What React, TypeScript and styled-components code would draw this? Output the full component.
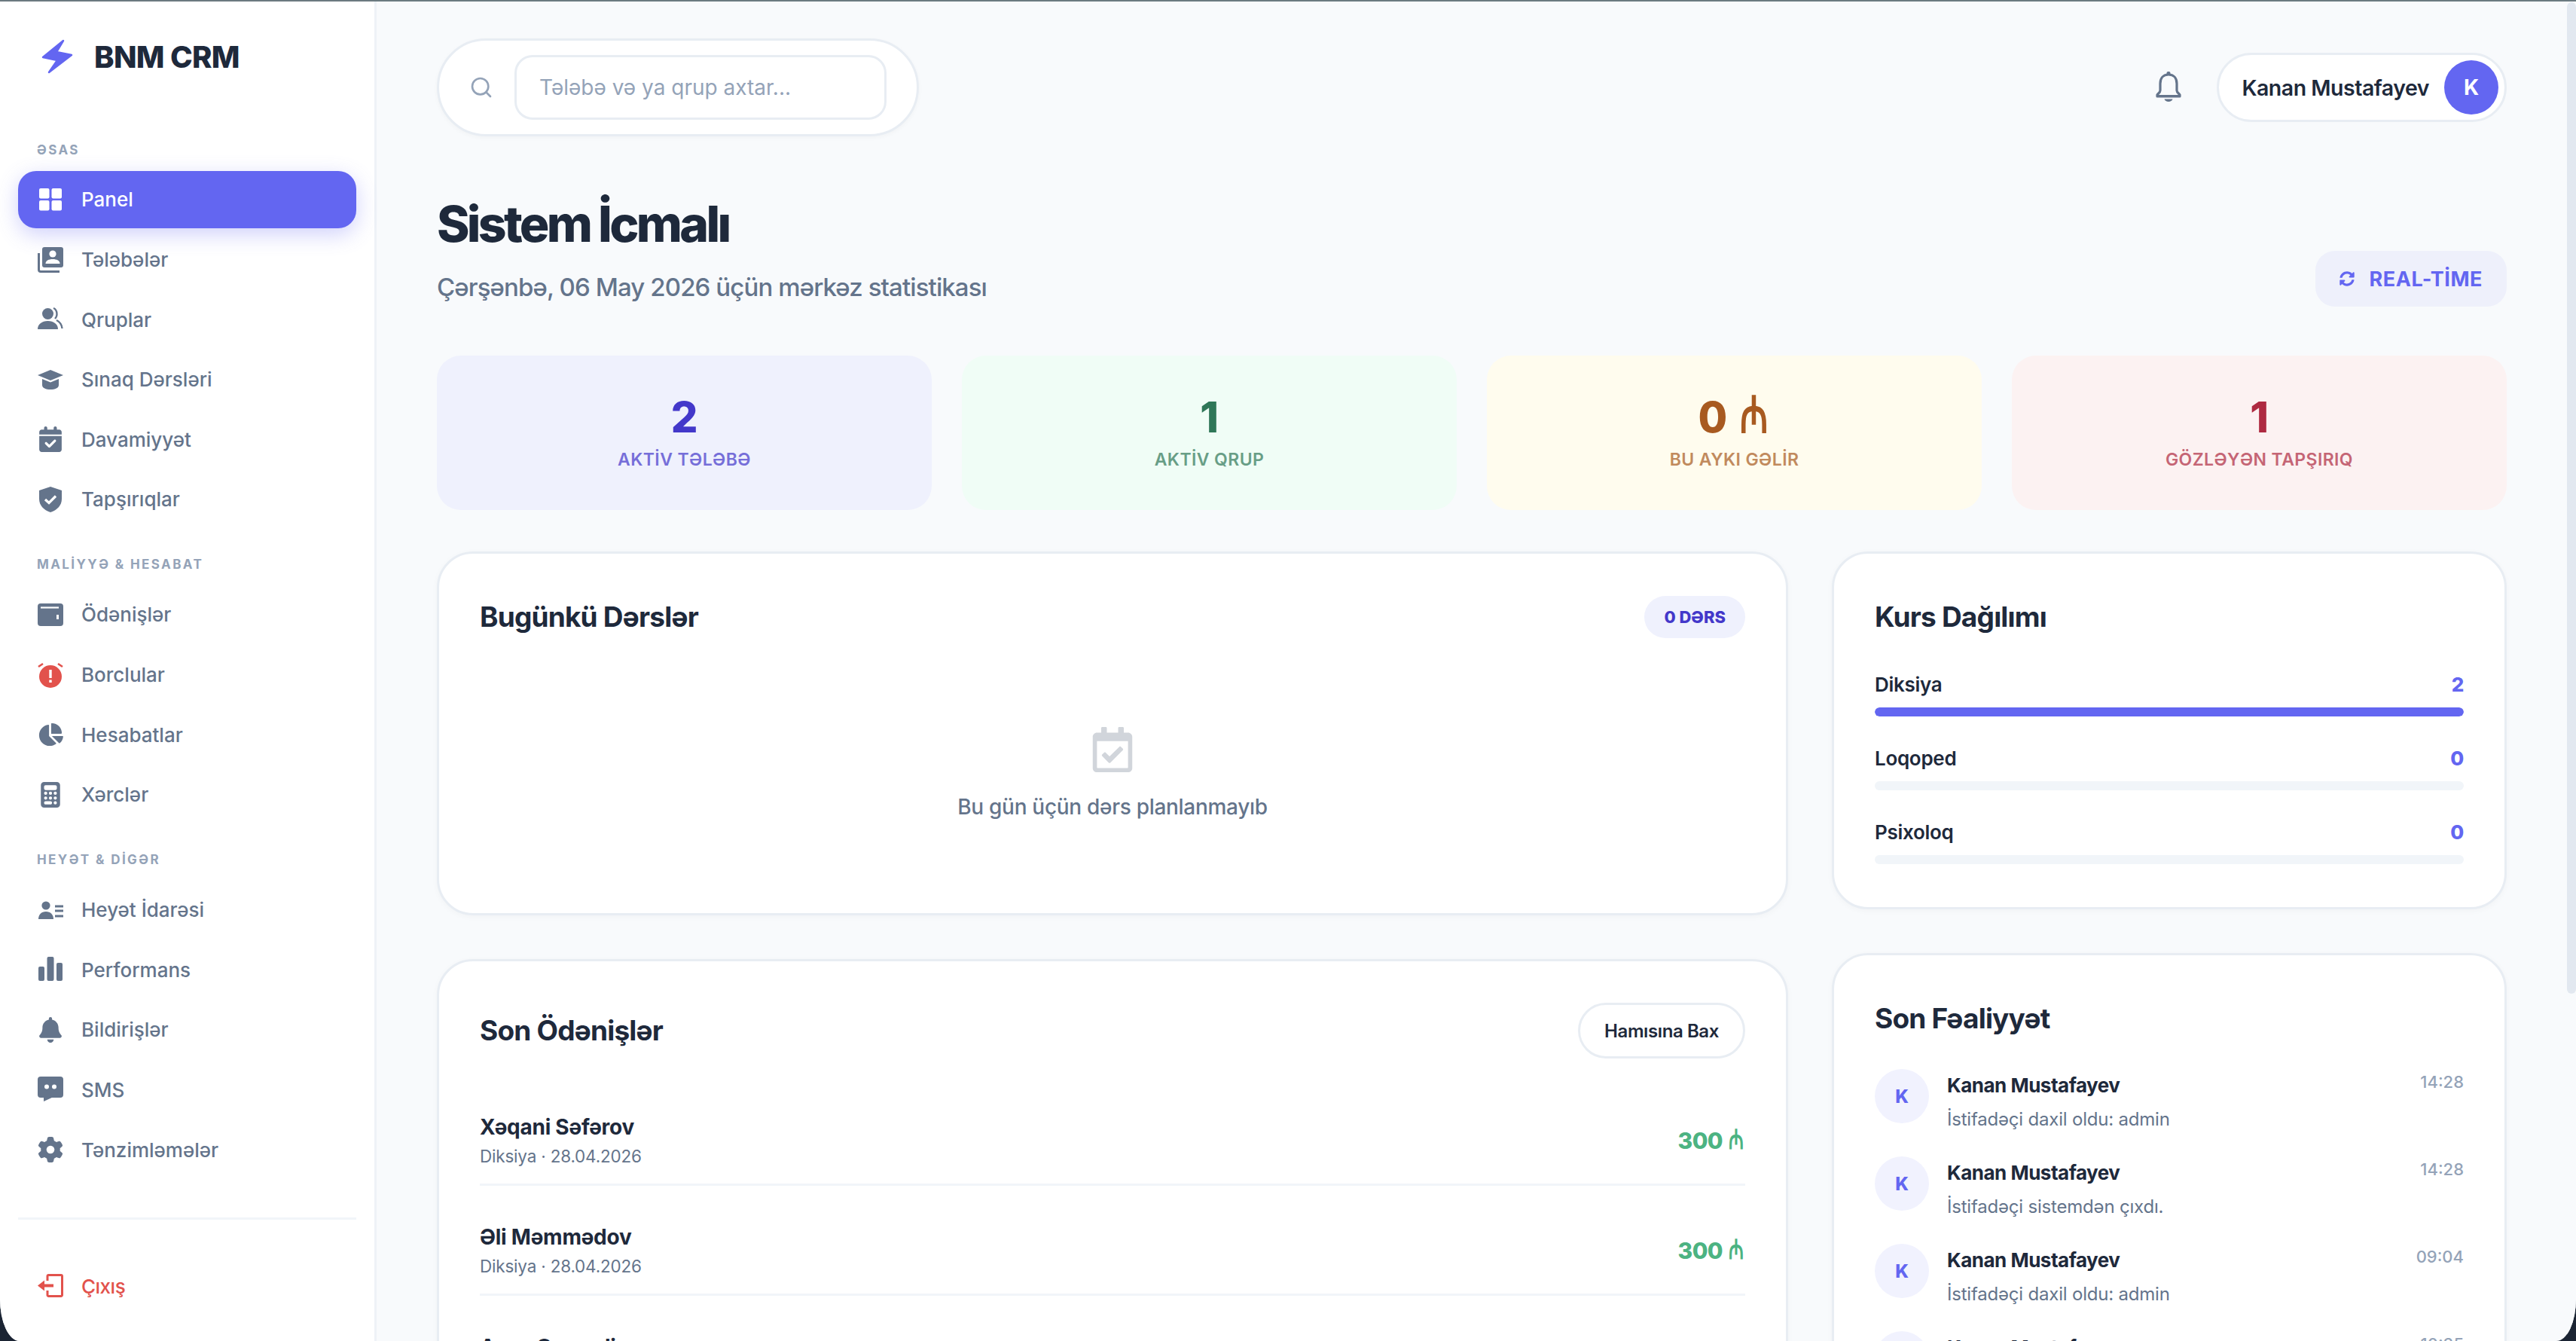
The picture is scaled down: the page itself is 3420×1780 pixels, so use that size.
import styled, { createGlobalStyle } from 'styled-components'
import { LuSearch } from 'react-icons/lu'
import { FaSyncAlt, FaRegCalendarCheck } from 'react-icons/fa'
import {
  FaCalendarCheck,
  FaChartPie,
  FaCalculator,
  FaBell,
  FaGear,
} from 'react-icons/fa6'

const GlobalStyle = createGlobalStyle`
  html, body {
    margin: 0;
    padding: 0;
    height: 100%;
    background: #1b2433;
    overflow: hidden;
  }
  * { box-sizing: border-box; }
`

const FONT = `Inter, "Noto Sans", sans-serif`

const BoltLogo = () => (
  <svg width="42" height="46" viewBox="0 0 42 46">
    <path
      d="M29 2 L2 24 L21 28 L10 44 L40 21 L20 17 Z"
      fill="#6366f1"
      stroke="#6366f1"
      strokeWidth="2.5"
      strokeLinejoin="round"
    />
  </svg>
)

const Icon = ({ children }: { children: React.ReactNode }) => (
  <svg viewBox="0 0 34 34" fill="currentColor">
    {children}
  </svg>
)

const PanelIcon = () => (
  <Icon>
    <rect x="2" y="2" width="13.5" height="13.5" rx="2" />
    <rect x="18.5" y="2" width="13.5" height="13.5" rx="2" />
    <rect x="2" y="18" width="13.5" height="13.5" rx="2" />
    <rect x="18.5" y="18" width="13.5" height="13.5" rx="2" />
  </Icon>
)

const StudentsIcon = () => (
  <Icon>
    <rect x="6" y="0" width="28" height="27" rx="3" />
    <path d="M1.5 8 V30 a2.5 2.5 0 0 0 2.5 2.5 H29" fill="none" stroke="currentColor" strokeWidth="3" />
    <circle cx="20" cy="9" r="4.6" fill="#fff" />
    <path d="M10.5 22 c0-4 4-6 9.500-6 s9.500 2 9.500 6 Z" fill="#fff" />
  </Icon>
)

const GroupsIcon = () => (
  <Icon>
    <circle cx="13.500" cy="9.500" r="7.500" />
    <path d="M0 30 c0-7 6-11 13.500-11 s13.500 4 13.500 11 Z" />
    <path d="M21 2 c5 2 6 10 2 14" fill="none" stroke="currentColor" strokeWidth="2.400" />
    <path d="M25 18 c4 2 7 6 7.500 11" fill="none" stroke="currentColor" strokeWidth="2.400" />
  </Icon>
)

const TrialIcon = () => (
  <Icon>
    <path d="M17 4 L34 11 L17 18 L0 11 Z" />
    <path d="M6 16 v8 c0 4 5 6 11 6 s11-2 11-6 v-8 l-11 4.500 Z" />
  </Icon>
)

const ShieldIcon = () => (
  <Icon>
    <path d="M17 0 L32 5 V16 c0 9-6 15-15 18 c-9-3-15-9-15-18 V5 Z" />
    <path d="M10 17 L15 21.500 L24 12.500" fill="none" stroke="#fff" strokeWidth="3.200" />
  </Icon>
)

const WalletIcon = () => (
  <Icon>
    <rect x="0" y="2" width="34" height="30" rx="4" />
    <path d="M4 7.500 H28" stroke="#fff" strokeWidth="2.200" />
    <rect x="25" y="17" width="3" height="6" fill="#fff" />
  </Icon>
)

const DebtIcon = () => (
  <Icon>
    <circle cx="17" cy="19" r="15" />
    <path d="M1 6 L7 2 M27 2 L33 6" stroke="currentColor" strokeWidth="2.600" />
    <rect x="15.300" y="10" width="3.400" height="11" fill="#fff" />
    <rect x="15.300" y="23.500" width="3.400" height="3.500" fill="#fff" />
  </Icon>
)

const StaffIcon = () => (
  <Icon>
    <circle cx="11" cy="11" r="5.600" />
    <path d="M1 29 c0-6 4-10 10-10 s10 4 10 10 Z" />
    <path d="M23 12 H34 M23 18 H34 M23 25 H34" stroke="currentColor" strokeWidth="3" />
  </Icon>
)

const BarsIcon = () => (
  <Icon>
    <rect x="1" y="13" width="8" height="19" rx="2" />
    <rect x="12.500" y="0" width="9" height="32" rx="2" />
    <rect x="25" y="8" width="8" height="24" rx="2" />
  </Icon>
)

const SmsIcon = () => (
  <Icon>
    <rect x="0" y="0" width="34" height="28" rx="4" />
    <path d="M8 26 V33 L21 27 Z" />
    <circle cx="12" cy="13.500" r="3" fill="#fff" />
    <circle cx="22" cy="13.500" r="3" fill="#fff" />
  </Icon>
)

const LogoutIcon = () => (
  <Icon>
    <path
      d="M13 9 V3 a1.500 1.500 0 0 1 1.500-1.500 H31 a1.500 1.500 0 0 1 1.500 1.500 V28 a1.500 1.500 0 0 1-1.500 1.500 H14.500 a1.500 1.500 0 0 1-1.500-1.500 V22"
      fill="none"
      stroke="currentColor"
      strokeWidth="3"
    />
    <path d="M0 15.500 L9 8.500 V13.500 H21 V17.500 H9 V22.500 Z" />
  </Icon>
)

const nav = [
  {
    title: 'ƏSAS',
    items: [
      { icon: <PanelIcon />, label: 'Panel', active: true },
      { icon: <StudentsIcon />, label: 'Tələbələr' },
      { icon: <GroupsIcon />, label: 'Qruplar' },
      { icon: <TrialIcon />, label: 'Sınaq Dərsləri' },
      { icon: <FaCalendarCheck />, label: 'Davamiyyət' },
      { icon: <ShieldIcon />, label: 'Tapşırıqlar' },
    ],
  },
  {
    title: 'MALİYYƏ & HESABAT',
    items: [
      { icon: <WalletIcon />, label: 'Ödənişlər' },
      { icon: <DebtIcon />, label: 'Borclular', danger: true },
      { icon: <FaChartPie />, label: 'Hesabatlar' },
      { icon: <FaCalculator />, label: 'Xərclər' },
    ],
  },
  {
    title: 'HEYƏT & DİGƏR',
    items: [
      { icon: <StaffIcon />, label: 'Heyət İdarəsi' },
      { icon: <BarsIcon />, label: 'Performans' },
      { icon: <FaBell />, label: 'Bildirişlər' },
      { icon: <SmsIcon />, label: 'SMS' },
      { icon: <FaGear />, label: 'Tənzimləmələr' },
    ],
  },
]

const stats = [
  { value: '2', label: 'Aktİv Tələbə', bg: '#eff1fd', color: '#4338ca' },
  { value: '1', label: 'Aktİv Qrup', bg: '#f0fdf6', color: '#2f7758' },
  { value: '0', money: true, label: 'Bu Aykı Gəlİr', bg: '#fffcee', color: '#a85a20' },
  { value: '1', label: 'Gözləyən Tapşırıq', bg: '#fcf2f2', color: '#ae2a41' },
]

const courses = [
  { name: 'Diksiya', count: 2, width: 100 },
  { name: 'Loqoped', count: 0, width: 0 },
  { name: 'Psixoloq', count: 0, width: 0 },
]

const payments = [
  { name: 'Xəqani Səfərov', meta: 'Diksiya · 28.04.2026', amount: '300' },
  { name: 'Əli Məmmədov', meta: 'Diksiya · 28.04.2026', amount: '300' },
  { name: 'Ayan Qəmərli', meta: 'Diksiya · 28.04.2026', amount: '300' },
]

const activity = [
  { text: 'İstifadəçi daxil oldu: admin', time: '14:28' },
  { text: 'İstifadəçi sistemdən çıxdı.', time: '14:28' },
  { text: 'İstifadəçi daxil oldu: admin', time: '09:04' },
  { text: 'İstifadəçi sistemdən çıxdı.', time: '10:35' },
]

const App = () => {
  return (
    <Frame>
      <GlobalStyle />
      <Sidebar>
        <Brand>
          <BoltLogo />
          <span>BNM CRM</span>
        </Brand>

        <Nav>
          {nav.map((section) => (
            <Section key={section.title}>
              <SectionTitle>{section.title}</SectionTitle>
              {section.items.map((item) => (
                <NavItem key={item.label} $active={item.active}>
                  <NavIcon $danger={item.danger}>{item.icon}</NavIcon>
                  {item.label}
                </NavItem>
              ))}
            </Section>
          ))}
        </Nav>

        <Logout>
          <NavIcon $danger>
            <LogoutIcon />
          </NavIcon>
          Çıxış
        </Logout>
      </Sidebar>

      <Main>
        <Topbar>
          <SearchPill>
            <LuSearch />
            <SearchInput placeholder="Tələbə və ya qrup axtar..." />
          </SearchPill>

          <TopRight>
            <BellButton>
              <svg width="36" height="42" viewBox="0 0 36 42">
                <path
                  d="M18 4 C10 4 7 10 7 16 V25 C7 28 4 29 3 31 V33 H33 V31 C32 29 29 28 29 25 V16 C29 10 26 4 18 4 Z"
                  fill="none"
                  stroke="currentColor"
                  strokeWidth="3.200"
                  strokeLinejoin="round"
                />
                <rect x="15.500" y="0" width="5" height="5" rx="2" fill="currentColor" />
                <path d="M3 31 H33 V34 H3 Z" fill="currentColor" />
                <path d="M12.500 36.500 H23.500 C22.500 41 13.500 41 12.500 36.500 Z" fill="currentColor" />
              </svg>
            </BellButton>
            <UserPill>
              <UserName>Kanan Mustafayev</UserName>
              <UserAvatar>K</UserAvatar>
            </UserPill>
          </TopRight>
        </Topbar>

        <PageHead>
          <div>
            <PageTitle>Sistem İcmalı</PageTitle>
            <PageSub>Çərşənbə, 06 May 2026 üçün mərkəz statistikası</PageSub>
          </div>
          <RealTime>
            <FaSyncAlt />
            REAL-TİME
          </RealTime>
        </PageHead>

        <StatGrid>
          {stats.map((stat) => (
            <StatCard key={stat.label} $bg={stat.bg} $color={stat.color}>
              <StatValue>
                {stat.value}
                {stat.money && ' '}
                {stat.money && <Manat>₼</Manat>}
              </StatValue>
              <StatLabel>{stat.label}</StatLabel>
            </StatCard>
          ))}
        </StatGrid>

        <Columns>
          <Column>
            <LessonsCard>
              <CardHead>
                <CardTitle>Bugünkü Dərslər</CardTitle>
                <CountBadge>0 DƏRS</CountBadge>
              </CardHead>
              <Empty>
                <FaRegCalendarCheck />
                <EmptyText>Bu gün üçün dərs planlanmayıb</EmptyText>
              </Empty>
            </LessonsCard>

            <PaymentsCard>
              <PaymentsHead>
                <CardTitle>Son Ödənişlər</CardTitle>
                <GhostButton>Hamısına Bax</GhostButton>
              </PaymentsHead>
              {payments.map((payment) => (
                <PaymentRow key={payment.name}>
                  <div>
                    <PaymentName>{payment.name}</PaymentName>
                    <PaymentMeta>{payment.meta}</PaymentMeta>
                  </div>
                  <PaymentAmount>
                    {payment.amount} <Manat>₼</Manat>
                  </PaymentAmount>
                </PaymentRow>
              ))}
            </PaymentsCard>
          </Column>

          <Column>
            <CoursesCard>
              <CardTitle>Kurs Dağılımı</CardTitle>
              <CourseList>
                {courses.map((course) => (
                  <div key={course.name}>
                    <CourseRow>
                      <span>{course.name}</span>
                      <CourseCount>{course.count}</CourseCount>
                    </CourseRow>
                    <Track>
                      <Fill style={{ width: `${course.width}%` }} />
                    </Track>
                  </div>
                ))}
              </CourseList>
            </CoursesCard>

            <ActivityCard>
              <CardTitle>Son Fəaliyyət</CardTitle>
              <ActivityList>
                {activity.map((entry, i) => (
                  <ActivityRow key={i}>
                    <ActivityAvatar>K</ActivityAvatar>
                    <ActivityBody>
                      <ActivityName>Kanan Mustafayev</ActivityName>
                      <ActivityText>{entry.text}</ActivityText>
                    </ActivityBody>
                    <ActivityTime>{entry.time}</ActivityTime>
                  </ActivityRow>
                ))}
              </ActivityList>
            </ActivityCard>
          </Column>
        </Columns>
      </Main>

      <ScrollTrack>
        <ScrollThumb />
      </ScrollTrack>
    </Frame>
  )
}

export default App

const Frame = styled.div`
  display: flex;
  width: 3420px;
  height: 1780px;
  overflow: hidden;
  border-top: 2px solid #6b7a80;
  border-radius: 0 0 26px 26px / 0 0 56px 56px;
  background: #f8fafc;
  font-family: ${FONT};
`

const Sidebar = styled.aside`
  display: flex;
  flex-direction: column;
  flex: 0 0 500px;
  height: 100%;
  padding: 0 24px;
  background: #ffffff;
  border-right: 3px solid #eef2f7;
`

const Brand = styled.div`
  display: flex;
  align-items: center;
  gap: 28px;
  height: 146px;
  padding: 0 0 4px 31px;
  margin-top: 2px;
  color: #1e293b;
  font-size: 40px;
  font-weight: 800;
  letter-spacing: -0.7px;
`

const Nav = styled.nav`
  display: flex;
  flex-direction: column;
  flex: 1;
`

const Section = styled.div`
  display: flex;
  flex-direction: column;
  gap: 3.6px;
  padding-top: 38.5px;
`

const SectionTitle = styled.div`
  padding-left: 25px;
  margin-bottom: 14.9px;
  height: 20px;
  line-height: 20px;
  color: #94a3b8;
  font-size: 17px;
  font-weight: 700;
  letter-spacing: 2.4px;
`

const NavItem = styled.div<{ $active?: boolean }>`
  display: flex;
  align-items: center;
  gap: 24px;
  height: 76px;
  padding: 0 0 0 26px;
  border-radius: 24px;
  font-size: 26px;
  font-weight: 500;
  color: ${(p) => (p.$active ? '#ffffff' : '#64748b')};
  background: ${(p) => (p.$active ? '#6366f1' : 'transparent')};
  box-shadow: ${(p) => (p.$active ? '0 8px 28px rgba(99, 102, 241, 0.3)' : 'none')};
`

const NavIcon = styled.span<{ $danger?: boolean }>`
  display: flex;
  align-items: center;
  justify-content: center;
  flex: 0 0 34px;
  width: 34px;
  height: 34px;
  color: ${(p) => (p.$danger ? '#e2524c' : 'inherit')};

  svg {
    width: 34px;
    height: 34px;
  }
`

const Logout = styled.div`
  display: flex;
  flex: 0 0 164px;
  align-items: center;
  gap: 24px;
  padding: 16px 0 0 26px;
  border-top: 3px solid #f1f5f9;
  color: #e2524c;
  font-size: 26px;
  font-weight: 500;
  letter-spacing: -0.5px;
`

const Main = styled.main`
  flex: 1;
  height: 100%;
  padding: 49px 80px 0;
  overflow: hidden;
`

const Topbar = styled.header`
  display: flex;
  align-items: center;
  justify-content: space-between;
`

const SearchPill = styled.div`
  display: flex;
  align-items: center;
  gap: 28px;
  width: 640px;
  height: 130px;
  padding: 0 40px;
  background: #ffffff;
  border: 3px solid #e8edf3;
  border-radius: 65px;
  box-shadow: 0 2px 6px rgba(15, 23, 42, 0.03);

  > svg {
    flex: 0 0 32px;
    width: 32px;
    height: 32px;
    color: #94a3b8;
  }
`

const SearchInput = styled.input`
  flex: 1;
  min-width: 0;
  height: 86px;
  padding: 0 30px;
  background: #ffffff;
  border: 3px solid #e8edf3;
  border-radius: 24px;
  outline: none;
  font-family: ${FONT};
  font-size: 28px;

  &::placeholder {
    color: #94a3b8;
    opacity: 1;
  }
`

const TopRight = styled.div`
  display: flex;
  align-items: center;
  gap: 46px;
`

const BellButton = styled.div`
  display: flex;
  color: #64748b;
`

const UserPill = styled.div`
  display: flex;
  align-items: center;
  gap: 20px;
  height: 92px;
  padding: 0 8px 0 30px;
  background: #ffffff;
  border: 3px solid #e8edf3;
  border-radius: 46px;
`

const UserName = styled.span`
  color: #1e293b;
  font-size: 28.5px;
  font-weight: 600;
  letter-spacing: -0.5px;
`

const UserAvatar = styled.span`
  display: flex;
  align-items: center;
  justify-content: center;
  width: 72px;
  height: 72px;
  border-radius: 50%;
  background: #6366f1;
  color: #ffffff;
  font-size: 28px;
  font-weight: 700;
`

const PageHead = styled.div`
  display: flex;
  align-items: flex-end;
  justify-content: space-between;
  margin-top: 66px;
`

const PageTitle = styled.h1`
  margin: 0;
  color: #1e293b;
  font-size: 66px;
  font-weight: 800;
  line-height: 100px;
  letter-spacing: -3.7px;
`

const PageSub = styled.p`
  margin: 12px 0 4px;
  color: #64748b;
  font-size: 33px;
  font-weight: 500;
  line-height: 44px;
  letter-spacing: -0.9px;
`

const RealTime = styled.div`
  display: flex;
  align-items: center;
  gap: 20px;
  height: 74px;
  padding: 0 32px;
  background: #eef0fb;
  border-radius: 26px;
  color: #6366f1;
  font-size: 27px;
  font-weight: 700;
  letter-spacing: 0.5px;

  svg {
    width: 20px;
    height: 20px;
  }
`

const StatGrid = styled.section`
  display: grid;
  grid-template-columns: repeat(4, 1fr);
  gap: 40px;
  margin-top: 65px;
`

const StatCard = styled.div<{ $bg: string; $color: string }>`
  display: flex;
  flex-direction: column;
  align-items: center;
  height: 205px;
  padding-top: 48px;
  border-radius: 32px;
  background: ${(p) => p.$bg};
  color: ${(p) => p.$color};
`

const StatValue = styled.div`
  font-size: 56px;
  font-weight: 800;
  line-height: 68px;
`

const Manat = styled.span`
  display: inline-block;
  font-family: "DejaVu Sans", sans-serif;
  font-weight: 700;
  line-height: 1;
  letter-spacing: 0;
  transform: scale(0.82, 1.22);
  transform-origin: 50% 80%;
`

const StatLabel = styled.div`
  margin-top: 7px;
  font-size: 23px;
  font-weight: 600;
  line-height: 30px;
  letter-spacing: 0.4px;
  text-transform: uppercase;
  opacity: 0.7;
`

const Columns = styled.section`
  display: grid;
  grid-template-columns: 1794px 1fr;
  column-gap: 58px;
  margin-top: 55px;
`

const Column = styled.div`
  display: flex;
  flex-direction: column;
  gap: 58px;
`

const Card = styled.div`
  padding: 56px 54px;
  background: #ffffff;
  border: 3px solid #e8edf3;
  border-radius: 48px;
  box-shadow: 0 2px 8px rgba(15, 23, 42, 0.03);
`

const LessonsCard = styled(Card)`
  height: 483px;
`

const CardHead = styled.div`
  display: flex;
  align-items: center;
  justify-content: space-between;
`

const CardTitle = styled.h2`
  margin: 0;
  color: #1e293b;
  font-size: 37px;
  font-weight: 700;
  line-height: 56px;
  letter-spacing: -0.8px;
`

const CountBadge = styled.span`
  display: flex;
  align-items: center;
  height: 56px;
  padding: 0 26px;
  border-radius: 28px;
  background: #eff1fd;
  color: #4338ca;
  font-size: 22px;
  font-weight: 800;
`

const Empty = styled.div`
  display: flex;
  flex-direction: column;
  align-items: center;
  margin-top: 118px;
  color: #d1d5db;

  svg {
    width: 54px;
    height: 60px;
  }
`

const EmptyText = styled.p`
  margin: 28px 0 0;
  color: #64748b;
  font-size: 28px;
  font-weight: 500;
  line-height: 36px;
  letter-spacing: -0.3px;
`

const PaymentsCard = styled(Card)`
  padding-top: 55px;
`

const PaymentsHead = styled(CardHead)`
  height: 74px;
  margin-bottom: 23px;
`

const GhostButton = styled.span`
  display: flex;
  align-items: center;
  height: 74px;
  padding: 0 32px;
  background: #ffffff;
  border: 3px solid #e8edf3;
  border-radius: 37px;
  color: #1e293b;
  font-size: 24px;
  font-weight: 600;
  letter-spacing: -0.4px;
`

const PaymentRow = styled.div`
  display: flex;
  align-items: center;
  justify-content: space-between;
  height: 146px;
  padding-top: 28px;
  border-bottom: 3px solid #f1f5f9;
`

const PaymentName = styled.div`
  color: #1e293b;
  font-size: 28px;
  font-weight: 700;
  line-height: 36px;
  letter-spacing: -0.25px;
`

const PaymentMeta = styled.div`
  margin-top: 6px;
  color: #64748b;
  font-size: 22.5px;
  line-height: 30px;
  letter-spacing: -0.2px;
`

const PaymentAmount = styled.div`
  color: #4cb382;
  font-size: 30px;
  font-weight: 800;
  letter-spacing: -0.6px;
`

const CoursesCard = styled(Card)`
  height: 475px;
`

const CourseList = styled.div`
  display: flex;
  flex-direction: column;
  gap: 37px;
  margin-top: 43px;
`

const CourseRow = styled.div`
  display: flex;
  align-items: center;
  justify-content: space-between;
  height: 36px;
  margin-bottom: 13px;
  color: #1e293b;
  font-size: 26px;
  font-weight: 600;
  letter-spacing: -0.3px;
`

const CourseCount = styled.span`
  color: #6366f1;
  font-weight: 800;
`

const Track = styled.div`
  height: 12px;
  overflow: hidden;
  border-radius: 6px;
  background: #f1f5f9;
`

const Fill = styled.div`
  height: 100%;
  border-radius: 6px;
  background: #6366f1;
`

const ActivityCard = styled(Card)``

const ActivityList = styled.div`
  display: flex;
  flex-direction: column;
  gap: 44px;
  margin-top: 39px;
`

const ActivityRow = styled.div`
  display: flex;
  align-items: flex-start;
  gap: 24px;
  height: 72px;
`

const ActivityAvatar = styled.span`
  display: flex;
  align-items: center;
  justify-content: center;
  flex: 0 0 72px;
  height: 72px;
  border-radius: 50%;
  background: #f1f2fe;
  color: #6366f1;
  font-size: 24px;
  font-weight: 800;
`

const ActivityBody = styled.div`
  flex: 1;
  min-width: 0;
  padding-top: 4px;
`

const ActivityName = styled.div`
  color: #1e293b;
  font-size: 26px;
  font-weight: 700;
  line-height: 36px;
  letter-spacing: -0.5px;
`

const ActivityText = styled.div`
  margin-top: 9px;
  color: #64748b;
  font-size: 24px;
  line-height: 36px;
  letter-spacing: -0.2px;
`

const ActivityTime = styled.span`
  padding-top: 2px;
  color: #94a3b8;
  font-size: 22px;
  font-weight: 500;
  line-height: 30px;
`

const ScrollTrack = styled.div`
  flex: 0 0 12px;
  height: 100%;
  padding-top: 1px;
  background: #f8fafc;
`

const ScrollThumb = styled.div`
  height: 1316px;
  border-radius: 6px;
  background: #e2e8f0;
`
